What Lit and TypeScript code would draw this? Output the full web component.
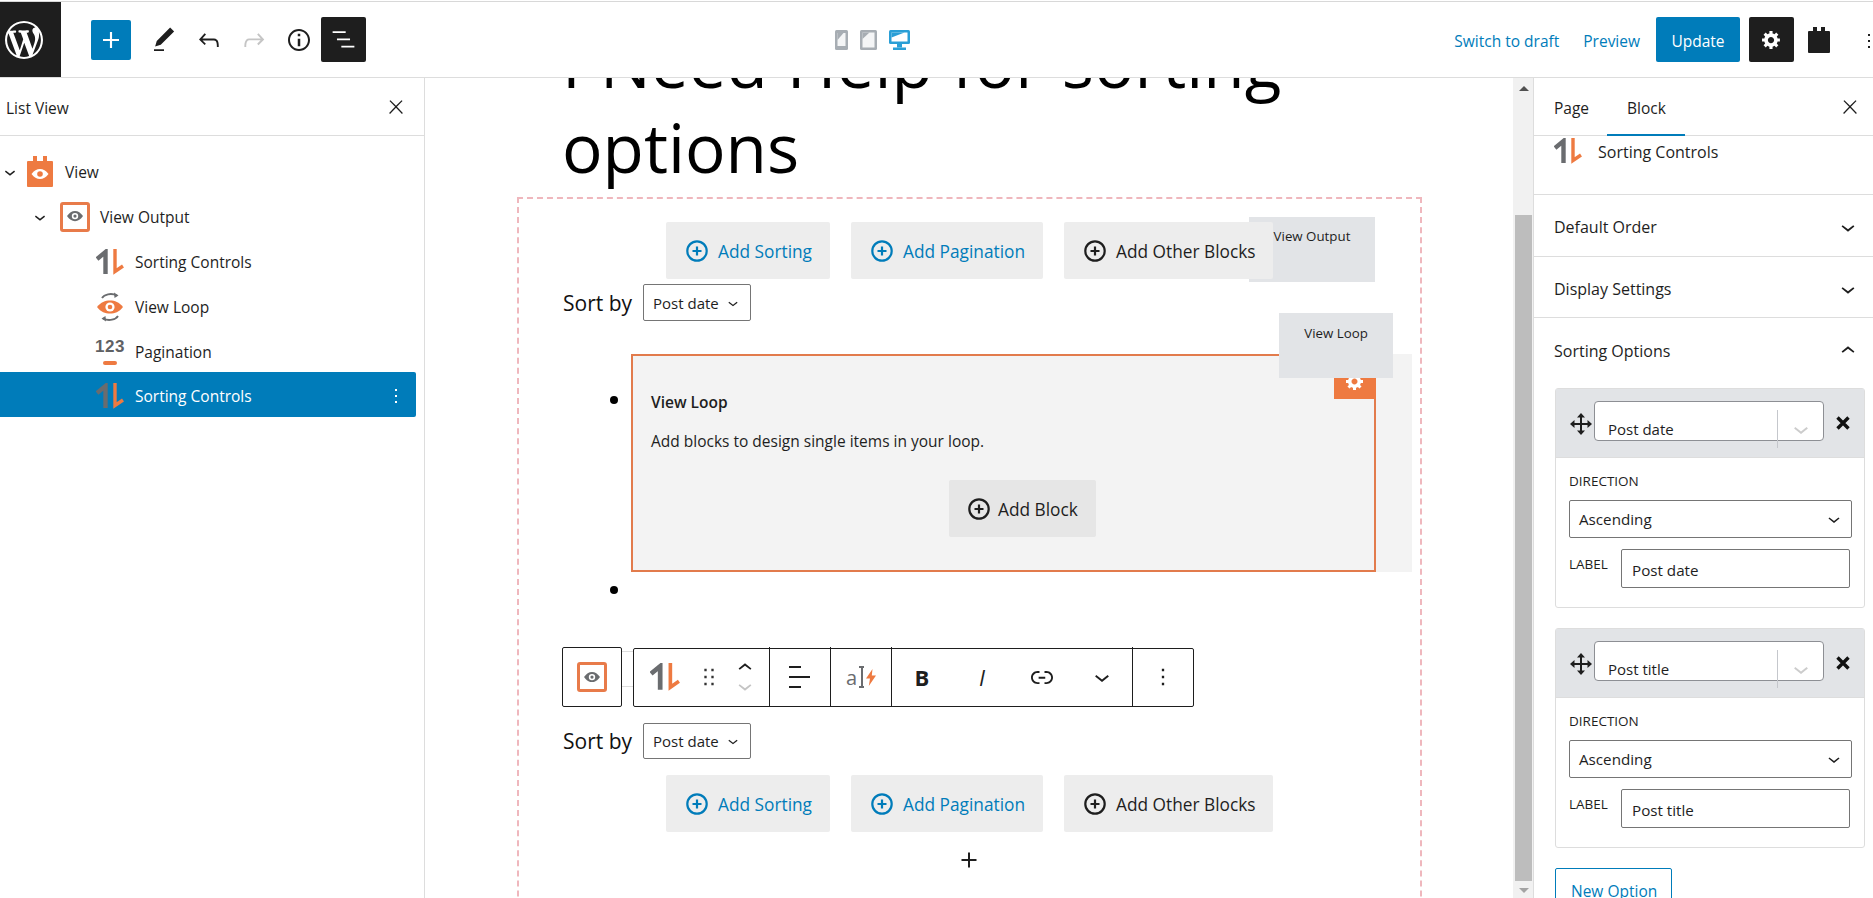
import { LitElement, html, css } from "lit";
import { customElement } from "lit/decorators.js";

const P = {
  plus: "M18 11.2h-5.2V6h-1.6v5.2H6v1.6h5.2V18h1.6v-5.2H18z",
  edit: "M20.1 5.1L16.9 2 6.2 12.7l-1.3 4.4 4.5-1.3L20.1 5.1zM4 20.8h8v-1.5H4v1.5z",
  undo: "M18.3 11.7c-.6-.6-1.4-.9-2.3-.9H6.7l2.9-3.3-1.1-1-4.5 5L8.5 16l1-1-2.7-2.7H16c.5 0 .9.2 1.3.5 1 1 1 3.4 1 4.5v.3h1.5v-.2c0-1.5 0-4.3-1.5-5.7z",
  redo: "M15.6 6.5l-1.1 1 2.9 3.3H8c-.9 0-1.7.3-2.3.9-1.4 1.5-1.4 4.2-1.4 5.6v.2h1.5v-.3c0-1.1 0-3.5 1-4.5.3-.3.7-.5 1.3-.5h9.2L14.5 15l1.1 1.1 4.6-4.6-4.6-5z",
  info: "M12 3.2c-4.8 0-8.8 3.9-8.8 8.8 0 4.8 3.9 8.8 8.8 8.8 4.8 0 8.8-3.9 8.8-8.8 0-4.8-4-8.8-8.8-8.8zm0 16c-4 0-7.2-3.3-7.2-7.2C4.8 8 8 4.8 12 4.8s7.2 3.3 7.2 7.2c0 4-3.2 7.2-7.2 7.2zM11 17h2v-6h-2v6zm0-8h2V7h-2v2z",
  list: "M13.8 5.2H3v1.5h10.8V5.2zm-3.6 12v1.5H21v-1.5H10.2zm7.2-6H6.6v1.5h10.8v-1.5z",
  close: "M13 11.8l6.1-6.3-1-1-6.1 6.2-6.1-6.2-1 1 6.1 6.3-6.5 6.7 1 1 6.5-6.6 6.5 6.6 1-1z",
  more: "M13 19h-2v-2h2v2zm0-6h-2v-2h2v2zm0-6h-2V5h2v2z",
  down: "M17.5 11.6L12 16l-5.5-4.4.9-1.2L12 14l4.5-3.6 1 1.2z",
  up: "M6.5 12.4L12 8l5.5 4.4-.9 1.2L12 10l-4.5 3.6-1-1.2z",
  drag: "M8 7h2V5H8v2zm0 6h2v-2H8v2zm0 6h2v-2H8v2zm6-14v2h2V5h-2zm0 8h2v-2h-2v2zm0 6h2v-2h-2v2z",
  link: "M15.6 7.2H14v1.5h1.6c2 0 3.7 1.7 3.7 3.7s-1.7 3.7-3.7 3.7H14v1.5h1.6c2.8 0 5.2-2.3 5.2-5.2 0-2.9-2.3-5.2-5.2-5.2zM4.7 12.4c0-2 1.7-3.7 3.7-3.7H10V7.2H8.4c-2.9 0-5.2 2.3-5.2 5.2 0 2.9 2.3 5.2 5.2 5.2H10v-1.5H8.4c-2 0-3.7-1.7-3.7-3.7zm4.6.9h5.3v-1.5H9.3v1.5z",
  wp: "M20 10c0-5.51-4.49-10-10-10C4.48 0 0 4.49 0 10c0 5.52 4.48 10 10 10 5.51 0 10-4.48 10-10zM7.78 15.37L4.37 6.22c.55-.02 1.17-.08 1.17-.08.5-.06.44-1.13-.06-1.11 0 0-1.45.11-2.37.11-.18 0-.37 0-.58-.01C4.12 2.69 6.87 1.11 10 1.11c2.33 0 4.45.87 6.05 2.34-.68-.11-1.65.39-1.65 1.58 0 .74.45 1.36.9 2.1.35.61.55 1.36.55 2.46 0 1.49-1.4 5-1.4 5l-3.03-8.37c.54-.02.82-.17.82-.17.5-.05.44-1.25-.06-1.22 0 0-1.44.12-2.38.12-.87 0-2.33-.12-2.33-.12-.5-.03-.56 1.2-.06 1.22l.92.08 1.26 3.41zM17.41 10c.24-.64.74-1.87.43-4.25.7 1.29 1.05 2.71 1.05 4.25 0 3.29-1.73 6.24-4.4 7.78.97-2.59 1.94-5.2 2.92-7.78zM6.1 18.09C3.12 16.65 1.11 13.53 1.11 10c0-1.3.23-2.48.72-3.59C3.25 10.3 4.67 14.2 6.1 18.09zm4.03-6.63l2.58 6.98c-.86.29-1.76.45-2.71.45-.79 0-1.57-.11-2.29-.33.81-2.38 1.62-4.74 2.42-7.1z",
  cog: "M18 12h-2.18c-.17.7-.44 1.35-.81 1.93l1.54 1.54-2.1 2.1-1.54-1.54c-.58.36-1.23.63-1.91.79V19H8v-2.18c-.68-.16-1.33-.43-1.91-.79l-1.54 1.54-2.12-2.12 1.54-1.54c-.36-.58-.63-1.23-.79-1.91H1V9.03h2.17c.16-.7.44-1.35.8-1.94L2.43 5.55l2.1-2.1 1.54 1.54c.58-.37 1.24-.64 1.93-.81V2h3v2.18c.68.16 1.33.43 1.91.79l1.54-1.54 2.12 2.12-1.54 1.54c.36.59.64 1.24.8 1.94H18V12zm-8.5 1.5c1.66 0 3-1.34 3-3s-1.34-3-3-3-3 1.34-3 3 1.34 3 3 3z",
};

const ORANGE = "#ee7a41";
const GRAY = "#6a6c6f";

const ic = (d: string, size = 24, fill = "currentColor", vb = "0 0 24 24") =>
  html`<svg width=${size} height=${size} viewBox=${vb} fill=${fill} aria-hidden="true"><path d=${d}></path></svg>`;

const sortIcon = (w = 28, h = 26) => html`<svg width=${w} height=${h} viewBox="0 0 28 26" fill="none" aria-hidden="true">
  <polyline points="1,10 9.5,3 9.5,25" stroke=${GRAY} stroke-width="4.4"></polyline>
  <polyline points="19,0 19,22.5 27,17" stroke=${ORANGE} stroke-width="3.4"></polyline>
</svg>`;

const eye = (fill: string, pupil: string, w = 22) => html`<svg width=${w} height=${w * 0.64} viewBox="0 0 22 14" aria-hidden="true">
  <path d="M0 7C3 2.4 6.8 0 11 0s8 2.4 11 7c-3 4.6-6.8 7-11 7S3 11.6 0 7z" fill=${fill}></path>
  <circle cx="11" cy="7" r="4.4" fill=${pupil}></circle><circle cx="11" cy="7" r="2.2" fill=${fill}></circle>
</svg>`;

const viewIcon = () => html`<svg width="26" height="31" viewBox="0 0 26 31" aria-hidden="true">
  <path d="M1 5h5V0h4v5h6V0h4v5h5a1 1 0 0 1 1 1v24a1 1 0 0 1-1 1H1a1 1 0 0 1-1-1V6a1 1 0 0 1 1-1z" fill=${ORANGE}></path>
  <path d="M4.5 18C7 14.5 9.8 13 13 13s6 1.5 8.5 5c-2.5 3.5-5.3 5-8.5 5s-6-1.5-8.5-5z" fill="#fff"></path>
  <circle cx="13" cy="18" r="2.8" fill=${ORANGE}></circle>
</svg>`;

const loopIcon = () => html`<svg width="26" height="30" viewBox="0 0 26 30" fill="none" aria-hidden="true">
  <path d="M5 6C7 2.5 14 .5 20 3.5" stroke=${GRAY} stroke-width="1.8"></path>
  <path d="M17 .5l4.5 3-4 2.5z" fill=${GRAY}></path>
  <path d="M21 24c-2 3.5-9 5.5-15 2.5" stroke=${GRAY} stroke-width="1.8"></path>
  <path d="M9 29.5l-4.5-3 4-2.5z" fill=${GRAY}></path>
  <path d="M0 15C4 10 8 8.5 13 8.5S22 10 26 15c-4 5-8 6.5-13 6.5S4 20 0 15z" fill=${ORANGE}></path>
  <circle cx="13" cy="15" r="4.6" fill="#fff"></circle><circle cx="13" cy="15" r="2.3" fill=${ORANGE}></circle>
</svg>`;

const plusCircle = (size = 22) => html`<svg width=${size} height=${size} viewBox="0 0 22 22" fill="none" stroke="currentColor" aria-hidden="true">
  <circle cx="11" cy="11" r="9.7" stroke-width="2.2"></circle>
  <path d="M11 6.5v9M6.5 11h9" stroke-width="2.2"></path>
</svg>`;

const moveIcon = () => html`<svg width="22" height="22" viewBox="0 0 22 22" aria-hidden="true">
  <path d="M11 0l4 4.5h-3V10h5.5V7l4.5 4-4.500 4v-3H12v5.500h3L11 22l-4-4.500h3V12H4.500v3L0 11l4.500-4v3H10V4.500H7z" fill="#1e1e1e"></path>
</svg>`;

const boldX = () => html`<svg width="14" height="14" viewBox="0 0 14 14" aria-hidden="true">
  <path d="M1.5 1.5l11 11M12.5 1.5l-11 11" stroke="#111" stroke-width="3.4" fill="none"></path>
</svg>`;

const device = (kind: string) => {
  const c = kind === "desktop" ? "#2a9fd6" : "#a7adb3";
  if (kind === "phone")
    return html`<svg width="13" height="20" viewBox="0 0 13 20" aria-hidden="true"><rect width="13" height="20" rx="1.5" fill=${c}></rect><rect x="2.5" y="3" width="8" height="13" fill="#f4f5f6"></rect><path d="M2.5 3h6L2.5 10z" fill=${c}></path></svg>`;
  if (kind === "tablet")
    return html`<svg width="17" height="20" viewBox="0 0 17 20" aria-hidden="true"><rect width="17" height="20" rx="1.5" fill=${c}></rect><rect x="2.5" y="2.5" width="12" height="15" fill="#f4f5f6"></rect><path d="M2.5 2.5h7L2.5 9z" fill=${c}></path></svg>`;
  return html`<svg width="21" height="20" viewBox="0 0 21 20" aria-hidden="true"><rect width="21" height="14" rx="1.5" fill=${c}></rect><rect x="2.5" y="2.5" width="16" height="9" fill="#fff"></rect><path d="M2.5 2.5h13L2.5 7.5z" fill=${c}></path><rect x="8" y="14" width="5" height="3.5" fill=${c}></rect><rect x="4" y="17.5" width="13" height="2.5" fill=${c}></rect></svg>`;
};

const bolt = () => html`<svg width="10" height="17" viewBox="0 0 10 17" aria-hidden="true"><path d="M6.5 0L0 9.5h4L2.8 17 10 6.5H5.8z" fill=${ORANGE}></path></svg>`;

@customElement("app-root")
export class AppRoot extends LitElement {
  static styles = css`
    :host { display: block; height: 898px; overflow: hidden; background: #fff; color: #1e1e1e;
      font-family: "Open Sans", "Noto Sans", sans-serif; font-size: 15.5px; }
    * { box-sizing: border-box; }
    svg { display: block; flex: none; }
    .root { height: 898px; padding-top: 1px; display: flex; flex-direction: column; }
    .top { height: 77px; border-top: 1px solid #d8d8d8; border-bottom: 1px solid #ddd; display: flex; align-items: center; flex: none; background: #fff; }
    .logo { width: 61px; height: 75px; background: #1e1e1e; color: #fff; display: flex; align-items: center; padding-left: 5px; flex: none; }
    .add { width: 40px; height: 40px; margin-left: 30px; background: #007cba; color: #fff; border-radius: 2px; display: flex; align-items: center; justify-content: center; }
    .tb { width: 45px; height: 45px; display: flex; align-items: center; justify-content: center; color: #1e1e1e; flex: none; }
    .tb.first { margin-left: 10px; }
    .tb.off { color: #c5c5c5; }
    .tb.dark { background: #1e1e1e; color: #fff; border-radius: 2px; }
    .devices { display: flex; align-items: flex-start; gap: 12px; margin-left: 469px; }
    .actions { margin-left: auto; display: flex; align-items: center; padding-top: 3px; }
    .actions .update, .actions .tb, .actions .cal { margin-top: -3px; }
    .link { color: #007cba; }
    .link.s { margin-right: 24px; }
    .link.p { margin-right: 16px; }
    .update { width: 84px; height: 45px; background: #007cba; color: #fff; border-radius: 2px; display: flex; align-items: center; justify-content: center; padding-top: 3px; }
    .cogbtn { margin-left: 9px; }
    .cal { margin-left: 14px; }
    .kebab { margin-left: 27px; margin-right: -8px; width: 24px; }

    .main { flex: 1; display: flex; min-height: 0; }
    .lv { width: 425px; flex: none; border-right: 1px solid #ddd; }
    .lvh { height: 58px; border-bottom: 1px solid #ddd; display: flex; align-items: center; justify-content: space-between; padding: 0 17px 0 6px; }
    .lvh span { margin-top: 2px; }
    .tree { padding-top: 13px; }
    .row { height: 45px; display: flex; align-items: center; width: 416px; flex: none; }
    .row .chev { width: 20px; display: flex; justify-content: center; flex: none; }
    .row .ico { display: flex; align-items: center; justify-content: center; flex: none; }
    .row.l0 { padding-left: 0; }
    .row.l0 .ico { width: 26px; margin: 0 12px 0 7px; }
    .row.l1 { padding-left: 30px; }
    .row.l1 .ico { margin: 0 10px 0 10px; }
    .row.l2 { padding-left: 95px; }
    .row.l2 .ico { width: 30px; margin-right: 10px; }
    .row.sel { background: #007cba; color: #fff; border-radius: 0 2px 2px 0; margin-top: -2px; padding-top: 3px; }
    .row .kb { margin-left: auto; margin-right: 8px; }
    .frame { width: 30px; height: 30px; border: 3px solid #e87b4a; border-radius: 3px; display: flex; align-items: center; justify-content: center; flex: none; }
    .pag { display: flex; flex-direction: column; align-items: center; font-weight: 700; color: #5f6164; font-size: 17px; line-height: 17px; letter-spacing: .5px; font-family: "Liberation Sans", sans-serif; }
    .pag i { display: block; width: 14px; height: 3.5px; border-radius: 2px; background: #ee7a41; margin-top: 6px; }

    .canvas { width: 1088px; flex: none; overflow: hidden; }
    .title { margin: -58px 0 7px 137px; font-size: 67.5px; line-height: 85px; font-weight: 400; color: #000; width: 800px; word-spacing: 1.5px; }
    .block { position: relative; margin-left: 92px; width: 905px; height: 800px; border: 2px dashed #efb7bd; border-bottom: 0; padding-top: 23px; }
    .btns { position: relative; display: flex; gap: 21px; margin-left: 147px; }
    .btn { height: 57px; background: #ededed; border-radius: 2px; display: flex; align-items: center; gap: 10px; padding-left: 20px; font-size: 17.3px; position: relative; }
    .btn span { margin-top: 2px; }
    .btn.blue { color: #007cba; }
    .w1 { width: 164px; } .w2 { width: 192px; } .w3 { width: 209px; }
    .tag { position: absolute; background: #e2e4e7; font-size: 13.3px; text-align: center; }
    .tag.o { left: 583px; top: -5px; width: 126px; height: 65px; padding-top: 10px; }
    .tag.v { left: 760px; top: 114px; width: 114px; height: 65px; padding-top: 11px; z-index: 2; }
    .sort { display: flex; align-items: center; margin: 5px 0 0 44px; height: 37px; font-size: 21px; color: #111; white-space: nowrap; }
    .sel1 { margin-left: 11px; width: 108px; height: 37px; border: 1px solid #757575; border-radius: 2px; display: flex; align-items: center; justify-content: space-between; font-size: 15px; padding: 0 7px 0 9px; color: #1e1e1e; }
    .li { display: flex; }
    .li.a { margin-top: 33px; }
    .dot { width: 8px; height: 8px; border-radius: 50%; background: #000; flex: none; margin: 42px 13px 0 91px; }
    .li.b { height: 75px; }
    .li.b .dot { margin-top: 14px; }
    .wrap { width: 781px; height: 218px; background: #f3f3f3; }
    .loop { position: relative; width: 745px; height: 218px; border: 2px solid #e27b4c; padding: 36px 0 0 18px; }
    .loop h4 { margin: 0; font-size: 15.5px; font-weight: 600; line-height: 20px; }
    .loop p { margin: 19px 0 0; font-size: 15.5px; line-height: 20px; }
    .addb { width: 147px; height: 57px; background: #e6e6e6; border-radius: 2px; display: flex; align-items: center; gap: 8px; padding-left: 19px; font-size: 17.3px; margin: 29px 0 0 298px; }
    .addb span { margin-top: 1px; }
    .gear { position: absolute; right: -2px; top: -2px; width: 42px; height: 45px; background: #ee7a41; color: #fff; display: flex; align-items: flex-end; justify-content: center; padding-bottom: 8px; }
    .tools { display: flex; align-items: flex-start; margin-left: 43px; }
    .one { width: 60px; height: 60px; border: 1px solid #1e1e1e; border-radius: 2px; display: flex; align-items: center; justify-content: center; flex: none; }
    .conn { width: 11px; height: 36px; margin-top: 4px; border-top: 1px solid #ddd; border-bottom: 1px solid #ddd; flex: none; }
    .bar { display: flex; height: 59px; margin-top: 1px; width: 561px; border: 1px solid #1e1e1e; border-radius: 2px; flex: none; }
    .seg { display: flex; align-items: center; border-left: 1px solid #1e1e1e; position: relative; height: 59px; margin-top: -2px; padding-top: 1px; justify-content: center; }
    .seg:first-child { border-left: 0; }
    .s1 { width: 135px; justify-content: flex-start; padding-left: 16px; }
    .s2, .s3, .s5 { width: 61px; }
    .s4 { width: 241px; justify-content: flex-start; }
    .cell { width: 60px; display: flex; justify-content: center; align-items: center; flex: none; }
    .cell b { font-size: 22px; font-weight: 700; }
    .cell i { font-size: 22px; font-weight: 500; }
    .udn { margin-left: 8px; display: flex; flex-direction: column; }
    .udn svg { margin: -5px 0; }
    .udn .dim { color: #c4c4c4; }
    .drag { margin-left: 15px; color: #333; }
    .aln { display: flex; flex-direction: column; gap: 8px; align-items: flex-start; width: 22px; }
    .aln i { display: block; height: 2px; background: #1e1e1e; width: 12px; }
    .aln i.lg { width: 21px; }
    .fmt { display: flex; align-items: center; gap: 2px; }
    .fmt span { font-size: 20px; color: #6a6c6f; }
    .fmt em { display: block; width: 5px; height: 22px; border: solid #6a6c6f; border-width: 2px 0; position: relative; }
    .fmt em::after { content: ""; position: absolute; left: 1.5px; top: 0; bottom: 0; width: 2px; background: #6a6c6f; }
    .sort.two { margin-top: 16px; height: 36px; }
    .sort.two .sel1 { height: 36px; }
    .btns.two { margin-top: 16px; }
    .plus { width: 30px; margin: 13px 0 0 435px; color: #1e1e1e; }

    .scroll { width: 21px; flex: none; background: #f1f1f1; border-right: 1px solid #ddd; padding-left: 1px; display: flex; flex-direction: column; align-items: center; }
    .sb-up, .sb-dn { height: 0; width: 0; border: 5px solid transparent; }
    .sb-up { border-bottom: 5px solid #505050; border-top: 0; margin-top: 8px; }
    .sb-dn { border-top: 5px solid #a3a3a3; border-bottom: 0; margin-top: 7px; }
    .thumb { width: 17px; height: 666px; background: #bdbdbd; margin-top: 124px; margin-left: -1px; flex: none; }

    .side { width: 339px; flex: none; overflow: hidden; padding-left: 1px; }
    .tabs { height: 58px; border-bottom: 1px solid #ddd; display: flex; align-items: center; position: relative; padding: 3px 0 0 19px; margin-left: -1px; }
    .tab:first-child { margin-left: 1px; }
    .tab.b { margin-left: 38px; }
    .ul { position: absolute; left: 73px; bottom: -1px; width: 78px; height: 2px; background: #007cba; }
    .tabs .x { position: absolute; right: 12px; top: 18px; }
    .cur { height: 59px; border-bottom: 1px solid #ddd; display: flex; align-items: flex-start; padding: 2px 0 0 20px; gap: 15px; font-size: 16px; margin-left: -1px; }
    .cur span { line-height: 22px; margin-top: 3px; margin-left: 1px; }
    .pan { height: 62px; border-bottom: 1px solid #ddd; display: flex; align-items: center; justify-content: space-between; padding: 3px 11px 0 20px; font-weight: 500; font-size: 16px; margin-left: -1px; }
    .pan.t { height: 61px; padding-top: 4px; }
    .pan.last { border: 0; height: 70px; padding-bottom: 4px; padding-top: 0; }
    .card { width: 310px; height: 220px; margin-left: 20px; border: 1px solid #ddd; border-radius: 3px; }
    .card + .card { margin-top: 20px; }
    .ch { height: 69px; background: #e2e4e7; border-bottom: 1px solid #ddd; display: flex; padding-top: 12px; position: relative; }
    .ch .mv { margin: 12px 2px 0 14px; }
    .rs { position: relative; width: 230px; height: 40px; background: #fff; border: 1px solid #8d8f94; border-radius: 4px; padding: 15px 0 0 13px; font-size: 15px; line-height: 24px; }
    .rs .d { position: absolute; left: 182px; top: 8px; height: 38px; width: 1px; background: #c5c7cc; }
    .rs .c { position: absolute; left: 191px; top: 12px; color: #ccc; }
    .ch .xx { margin: 15px 0 0 12px; }
    .cb { padding: 14px 13px 0; position: relative; }
    .lbl { font-size: 13.5px; font-weight: 500; line-height: 18px; display: block; }
    .dir { width: 283px; height: 38px; margin-top: 10px; border: 1px solid #757575; border-radius: 2px; display: flex; align-items: center; justify-content: space-between; padding: 0 5px 0 9px; font-size: 15.2px; }
    .lr { display: flex; margin-top: 11px; }
    .lr .lbl { width: 52px; margin-top: 6px; }
    .inp { width: 229px; height: 39px; border: 1px solid #757575; border-radius: 2px; display: flex; align-items: center; padding: 3px 0 0 10px; font-size: 15.2px; }
    .newb { width: 117px; height: 60px; margin: 20px 0 0 20px; border: 1px solid #007cba; border-radius: 2px; color: #007cba; padding: 11px 0 0 15px; }
  `;

  private buttons(two = false) {
    return html`<div class="btns ${two ? "two" : ""}">
      ${two ? "" : html`<div class="tag o">View Output</div>`}
      <div class="btn blue w1">${plusCircle()}<span>Add Sorting</span></div>
      <div class="btn blue w2">${plusCircle()}<span>Add Pagination</span></div>
      <div class="btn w3">${plusCircle()}<span>Add Other Blocks</span></div>
    </div>`;
  }

  private sortRow(two = false) {
    return html`<div class="sort ${two ? "two" : ""}">Sort by
      <div class="sel1"><span>Post date</span>${ic(P.down, 20)}</div>
    </div>`;
  }

  private card(name: string) {
    return html`<div class="card">
      <div class="ch">
        <div class="mv">${moveIcon()}</div>
        <div class="rs"><span>${name}</span><span class="d"></span><span class="c">${ic(P.down, 30)}</span></div>
        <div class="xx">${boldX()}</div>
      </div>
      <div class="cb">
        <span class="lbl">DIRECTION</span>
        <div class="dir"><span>Ascending</span>${ic(P.down, 24)}</div>
        <div class="lr"><span class="lbl">LABEL</span><div class="inp">${name}</div></div>
      </div>
    </div>`;
  }

  render() {
    return html`<div class="root">
      <header class="top">
        <div class="logo">${ic(P.wp, 38, "currentColor", "0 0 20 20")}</div>
        <div class="add">${ic(P.plus, 32)}</div>
        <div class="tb first">${ic(P.edit, 30)}</div>
        <div class="tb">${ic(P.undo, 30)}</div>
        <div class="tb off">${ic(P.redo, 30)}</div>
        <div class="tb">${ic(P.info, 30)}</div>
        <div class="tb dark">${ic(P.list, 29)}</div>
        <div class="devices">${device("phone")}${device("tablet")}${device("desktop")}</div>
        <div class="actions">
          <span class="link s">Switch to draft</span>
          <span class="link p">Preview</span>
          <div class="update">Update</div>
          <div class="tb dark cogbtn">${ic(P.cog, 21, "currentColor", "0 0 20 20")}</div>
          <div class="cal"><svg width="22" height="26" viewBox="0 0 22 26" aria-hidden="true"><path d="M1 4h4V0h4v4h4V0h4v4h4a1 1 0 0 1 1 1v20a1 1 0 0 1-1 1H1a1 1 0 0 1-1-1V5a1 1 0 0 1 1-1z" fill="#1e1e1e"></path></svg></div>
          <div class="kebab">${ic(P.more)}</div>
        </div>
      </header>
      <div class="main">
        <aside class="lv">
          <div class="lvh"><span>List View</span>${ic(P.close, 22)}</div>
          <div class="tree">
            <div class="row l0"><span class="chev">${ic(P.down, 22)}</span><span class="ico">${viewIcon()}</span>View</div>
            <div class="row l1"><span class="chev">${ic(P.down, 22)}</span><span class="ico"><span class="frame">${eye(GRAY, "#fff", 16)}</span></span>View Output</div>
            <div class="row l2"><span class="ico">${sortIcon()}</span>Sorting Controls</div>
            <div class="row l2"><span class="ico">${loopIcon()}</span>View Loop</div>
            <div class="row l2"><span class="ico"><span class="pag">123<i></i></span></span>Pagination</div>
            <div class="row l2 sel"><span class="ico">${sortIcon()}</span>Sorting Controls<span class="kb">${ic(P.more)}</span></div>
          </div>
        </aside>
        <main class="canvas">
          <h1 class="title">I Need Help for sorting options</h1>
          <div class="block">
            ${this.buttons()}
            ${this.sortRow()}
            <div class="tag v">View Loop</div>
            <div class="li a"><span class="dot"></span>
              <div class="wrap"><div class="loop">
                <div class="gear">${ic(P.cog, 20, "currentColor", "0 0 20 20")}</div>
                <h4>View Loop</h4>
                <p>Add blocks to design single items in your loop.</p>
                <div class="addb">${plusCircle()}<span>Add Block</span></div>
              </div></div>
            </div>
            <div class="li b"><span class="dot"></span></div>
            <div class="tools">
              <div class="one"><span class="frame">${eye(GRAY, "#fff", 16)}</span></div>
              <div class="conn"></div>
              <div class="bar">
                <div class="seg s1">${sortIcon(30, 28)}<span class="drag">${ic(P.drag, 28)}</span>
                  <span class="udn">${ic(P.up, 28)}<span class="dim">${ic(P.down, 28)}</span></span></div>
                <div class="seg s2"><span class="aln"><i></i><i class="lg"></i><i></i></span></div>
                <div class="seg s3"><span class="fmt"><span>a</span><em></em>${bolt()}</span></div>
                <div class="seg s4">
                  <span class="cell"><b>B</b></span>
                  <span class="cell"><i>I</i></span>
                  <span class="cell">${ic(P.link, 30)}</span>
                  <span class="cell">${ic(P.down, 30)}</span>
                </div>
                <div class="seg s5">${ic(P.more, 28)}</div>
              </div>
            </div>
            ${this.sortRow(true)}
            ${this.buttons(true)}
            <div class="plus">${ic(P.plus, 30)}</div>
          </div>
        </main>
        <div class="scroll"><span class="sb-up"></span><span class="thumb"></span><span class="sb-dn"></span></div>
        <aside class="side">
          <div class="tabs"><span class="tab">Page</span><span class="tab b">Block</span><span class="ul"></span><span class="x">${ic(P.close, 22)}</span></div>
          <div class="cur">${sortIcon()}<span>Sorting Controls</span></div>
          <div class="pan">Default Order${ic(P.down, 28)}</div>
          <div class="pan t">Display Settings${ic(P.down, 28)}</div>
          <div class="pan last">Sorting Options${ic(P.up, 28)}</div>
          ${this.card("Post date")}
          ${this.card("Post title")}
          <div class="newb">New Option</div>
        </aside>
      </div>
    </div>`;
  }
}
